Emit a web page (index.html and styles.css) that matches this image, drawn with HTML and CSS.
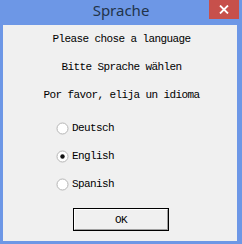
FILE: index.html
```html
<!DOCTYPE html>
<html>
<head>
<meta charset="utf-8">
<link rel="stylesheet" href="styles.css">
</head>
<body>
<div class="window">
  <div class="titlebar">
    <span class="title">Sprache</span>
    <div class="close">
      <svg width="10" height="9" viewBox="0 0 10 9"><path d="M1 0.5 L9 8.5 M9 0.5 L1 8.5" stroke="#fff" stroke-width="1.8" fill="none"/></svg>
    </div>
  </div>
  <div class="client">
    <div class="lines">
      <div class="line">Please chose a language</div>
      <div class="line">Bitte Sprache wählen</div>
      <div class="line">Por favor, elija un idioma</div>
    </div>
    <div class="radios">
      <div class="radio"><span class="dot"><svg width="13" height="13" viewBox="0 0 13 13"><circle cx="6.5" cy="6.5" r="5.5" fill="#fff" stroke="#b5b5b5"/></svg></span><span>Deutsch</span></div>
      <div class="radio"><span class="dot"><svg width="13" height="13" viewBox="0 0 13 13"><circle cx="6.5" cy="6.5" r="5.5" fill="#fff" stroke="#b5b5b5"/><circle cx="6.5" cy="6.5" r="2.2" fill="#111"/></svg></span><span>English</span></div>
      <div class="radio"><span class="dot"><svg width="13" height="13" viewBox="0 0 13 13"><circle cx="6.5" cy="6.5" r="5.5" fill="#fff" stroke="#b5b5b5"/></svg></span><span>Spanish</span></div>
    </div>
    <div class="btnrow">
      <div class="okbtn"><div class="okinner">OK</div></div>
    </div>
  </div>
</div>
</body>
</html>
```
FILE: styles.css
```css
html, body {
  margin: 0;
  padding: 0;
  background: #6d97e6;
}
.window {
  width: 242px;
  height: 244px;
  background: #6d97e6;
  display: flex;
  flex-direction: column;
}
.titlebar {
  position: relative;
  height: 25px;
  display: flex;
  justify-content: center;
}
.title {
  font-family: "Noto Sans", sans-serif;
  font-size: 15px;
  line-height: 21px;
  color: #22344a;
}
.close {
  position: absolute;
  left: 209px;
  top: 0;
  width: 30px;
  height: 19px;
  background: #c7504b;
  display: flex;
  align-items: center;
  justify-content: center;
}
.close svg { display: block; }
.client {
  margin: 0 5px 3px 3px;
  height: 216px;
  background: #f0f0f0;
  font-family: "Liberation Mono", monospace;
  font-size: 11px;
  letter-spacing: -0.6px;
  color: #000;
}
.lines {
  display: flex;
  flex-direction: column;
  align-items: center;
  padding-left: 3px;
}
.line {
  height: 28px;
  line-height: 28px;
  white-space: pre;
}
.radios {
  margin-top: 5px;
  padding-left: 53px;
  display: flex;
  flex-direction: column;
}
.radio {
  height: 28px;
  display: flex;
  align-items: center;
}
.dot {
  width: 16px;
  height: 13px;
  display: flex;
}
.dot svg { display: block; }
.btnrow {
  margin-top: 10px;
  padding-left: 70px;
  display: flex;
}
.okbtn {
  width: 96px;
  height: 23px;
  box-sizing: border-box;
  border: 1px solid #000;
}
.okinner {
  height: 100%;
  box-sizing: border-box;
  border-top: 1px solid #fff;
  border-left: 1px solid #fff;
  border-right: 1px solid #a0a0a0;
  border-bottom: 1px solid #a0a0a0;
  display: flex;
  align-items: center;
  justify-content: center;
}
```
